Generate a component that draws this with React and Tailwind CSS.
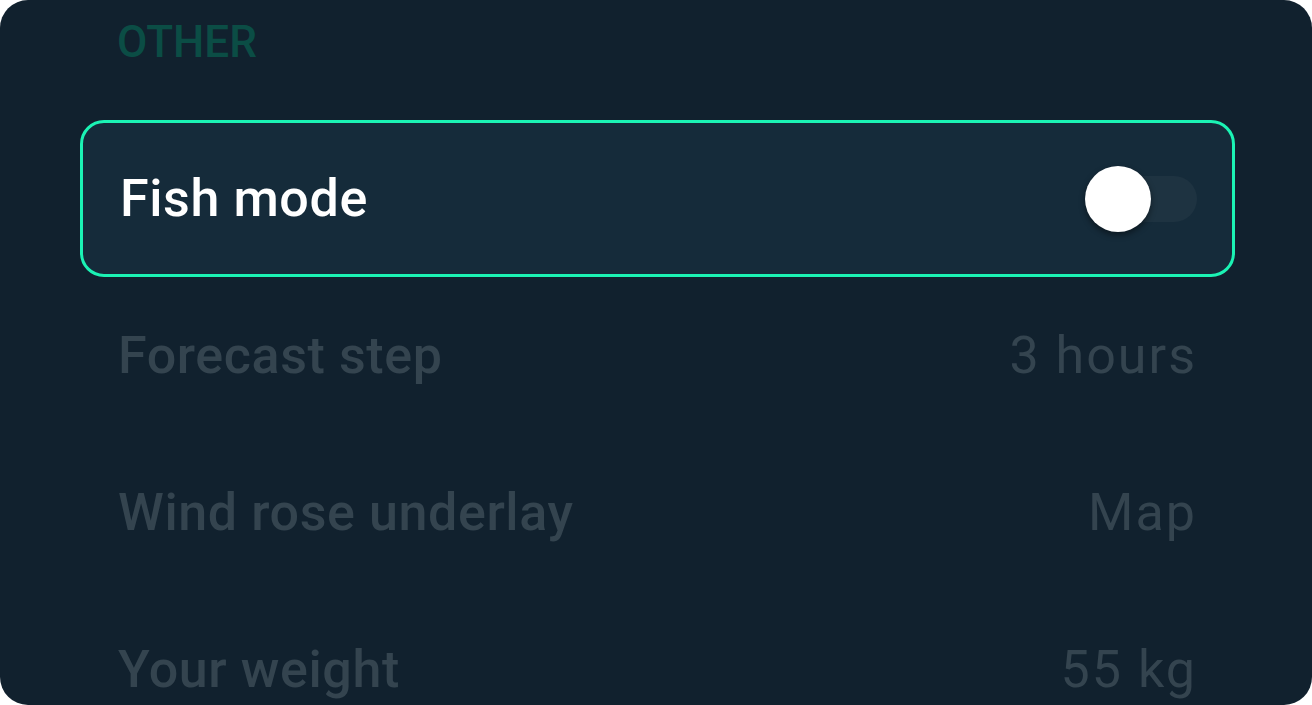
const rows = [
  { label: 'Forecast step', value: '3 hours' },
  { label: 'Wind rose underlay', value: 'Map' },
  { label: 'Your weight', value: '55 kg' },
]

const Toggle = () => (
  <div className="relative w-[112px] h-[66px] flex items-center">
    <div className="absolute right-0 w-[97px] h-[46px] rounded-full bg-[#1e3341]" />
    <div className="absolute left-0 w-[66px] h-[66px] rounded-full bg-white shadow-[0_3px_6px_rgba(0,0,0,0.45)]" />
  </div>
)

export default function App() {
  return (
    <div className="w-[1312px] h-[705px] bg-white" style={{ fontFamily: 'Roboto, sans-serif' }}>
      <div className="w-full h-full rounded-[28px] bg-[#11212e] overflow-hidden pl-[80px] pr-[77px] pt-[18px]">
        {/* Section title */}
        <div className="pl-[37px] text-[44px] font-medium leading-[48px] text-[#0b4d45]">OTHER</div>

        <div className="mt-[54px] flex flex-col">
          <div className="h-[157px] rounded-[24px] border-[3px] border-[#1bf3b4] bg-[#152b3a] flex items-center justify-between pl-[37px] pr-[35px]">
            <span className="text-[52px] font-medium text-white leading-none tracking-[0.6px]">Fish mode</span>
            <Toggle />
          </div>

          {rows.map((r) => (
            <div key={r.label} className="h-[157px] flex items-center justify-between pl-[38px] pr-[38px]">
              <span className="text-[52px] font-medium text-[#34444f] leading-none tracking-[0.6px]">{r.label}</span>
              <span className="text-[52px] text-[#34444f] leading-none tracking-[2px]">{r.value}</span>
            </div>
          ))}
        </div>
      </div>
    </div>
  )
}
